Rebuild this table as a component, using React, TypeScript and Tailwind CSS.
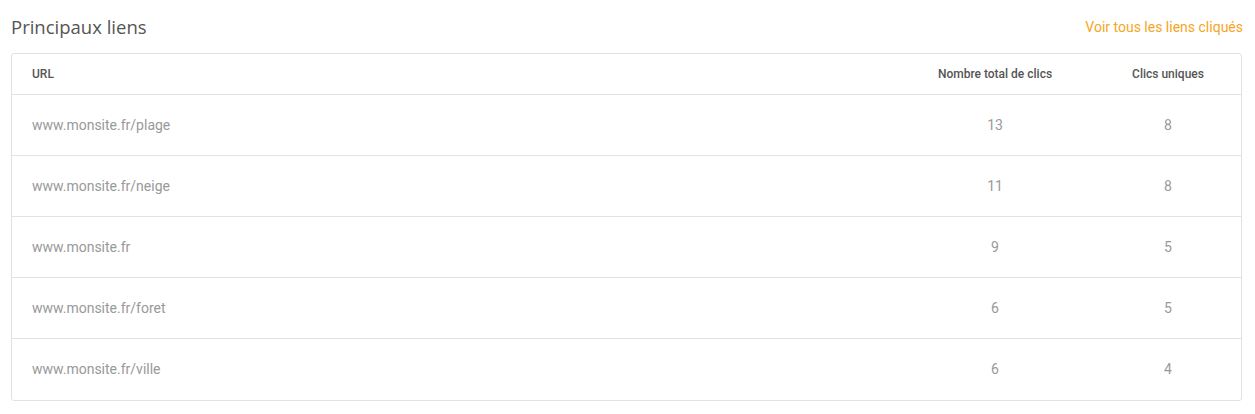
const rows = [
  { url: "www.monsite.fr/plage", total: 13, unique: 8 },
  { url: "www.monsite.fr/neige", total: 11, unique: 8 },
  { url: "www.monsite.fr", total: 9, unique: 5 },
  { url: "www.monsite.fr/foret", total: 6, unique: 5 },
  { url: "www.monsite.fr/ville", total: 6, unique: 4 },
];

const App: React.FC = () => {
  return (
    <div className="w-[1255px] bg-white pl-[11px] pr-[13px] pt-[15px] font-['Roboto',sans-serif]">
      <div className="flex h-[24px] items-center justify-between">
        <h2 className="font-['Open_Sans',sans-serif] text-[18.5px] font-medium text-[#555]">
          Principaux liens
        </h2>
        <a href="#" className="text-[14px] text-[#f5a623] -mr-[1px]">
          Voir tous les liens cliqués
        </a>
      </div>
      <div className="mt-[14px] rounded-[3px] border border-[#e2e2e2]">
        <div className="grid h-[41px] grid-cols-[1fr_200px_146px] items-center border-b border-[#e2e2e2] text-[12px] font-medium text-[#555]">
          <div className="pl-[20px]">URL</div>
          <div className="text-center">Nombre total de clics</div>
          <div className="text-center">Clics uniques</div>
        </div>
        {rows.map((row, index) => (
          <div
            key={index}
            className={`grid h-[61px] grid-cols-[1fr_200px_146px] items-center text-[14px] text-[#999] ${
              index < rows.length - 1 ? "border-b border-[#e2e2e2]" : ""
            }`}
          >
            <div className="pl-[20px]">{row.url}</div>
            <div className="text-center">{row.total}</div>
            <div className="text-center">{row.unique}</div>
          </div>
        ))}
      </div>
    </div>
  );
};

export default App;
